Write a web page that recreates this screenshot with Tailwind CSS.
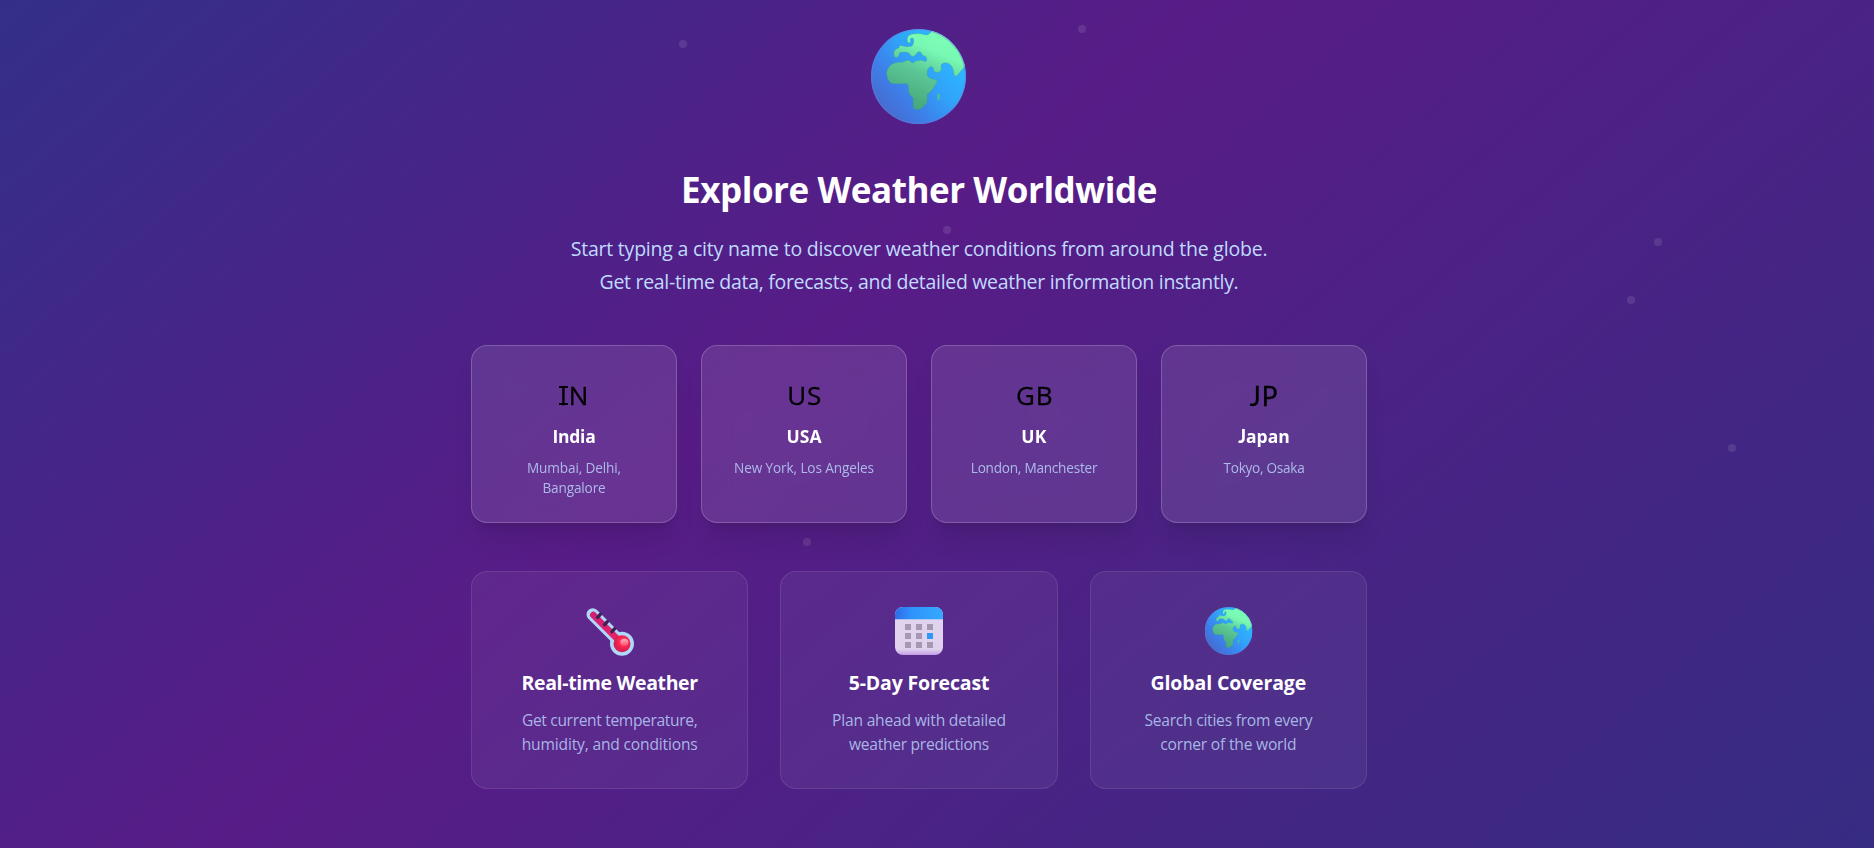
<!DOCTYPE html>
<html lang="en"><head><meta charset="utf-8"><title>Weather</title>
<script src="https://cdn.jsdelivr.net/npm/@tailwindcss/browser@4"></script></head>
<body class="h-[848px] overflow-hidden bg-[#581c87]">
<svg width="0" height="0" class="absolute"><defs>
<linearGradient id="sea" x1="0.1" y1="0.95" x2="0.85" y2="0.3"><stop offset="0" stop-color="#4a66c8"/><stop offset=".35" stop-color="#3d7ee8"/><stop offset=".7" stop-color="#30a4fa"/><stop offset="1" stop-color="#2eb6ff"/></linearGradient>
<linearGradient id="land" x1="0.35" y1="1" x2="0.75" y2="0.1"><stop offset="0" stop-color="#45a57a"/><stop offset=".45" stop-color="#5cc897"/><stop offset=".75" stop-color="#78f9b3"/><stop offset="1" stop-color="#7dffb6"/></linearGradient>
<clipPath id="disc"><circle cx="176" cy="169" r="142"/></clipPath>
<symbol id="globe" viewBox="34 27 284 284"><g clip-path="url(#disc)"><rect x="34" y="27" width="284" height="284" fill="url(#sea)"/>
<path fill="url(#land)" stroke="#3c9a86" stroke-opacity=".45" stroke-width="2" d="M220 20L214 36Q205 48 195 44Q182 40 165 41Q142 42 142 58Q142 70 150 69Q154 66 151 58Q156 51 161 56Q164 70 156 78Q145 82 130 78Q117 72 117 84Q102 88 102 100Q102 114 112 112Q120 108 119 98Q134 94 146 98L156 109Q165 111 169 102Q177 90 184 98Q184 106 198 110Q204 120 197 125Q186 118 180 121L168 122Q158 134 150 122Q142 118 130 126Q108 127 98 131Q84 140 80 158Q82 180 94 189Q110 192 140 190Q148 194 146 206Q146 225 160 232L160 262Q164 270 175 268Q186 268 202 246L202 222Q214 218 231 186Q234 180 226 178Q206 176 202 164Q200 144 212 140Q222 138 220 149Q224 158 232 158Q248 152 244 143Q240 130 256 128Q276 130 280 150Q282 172 290 168L330 120V20Z"/><path fill="#4dbf9c" d="M232 222l8-2v16l-7 4z"/></g><circle cx="176" cy="169" r="140" fill="none" stroke="#6d79d8" stroke-opacity=".45" stroke-width="4"/></symbol>
<linearGradient id="hd"><stop offset="0" stop-color="#2f6be8"/><stop offset=".35" stop-color="#2f93fc"/><stop offset="1" stop-color="#33aaff"/></linearGradient>
<linearGradient id="cb" x2="0" y2="1"><stop offset="0" stop-color="#e0d4ee"/><stop offset=".88" stop-color="#e0d2ee"/><stop offset="1" stop-color="#c39ee6"/></linearGradient>
<linearGradient id="tube" x1="0" y1="0" x2="1" y2="1"><stop offset="0" stop-color="#d21f72"/><stop offset="1" stop-color="#e82368"/></linearGradient>
<radialGradient id="bulb" cx=".6" cy=".4"><stop offset="0" stop-color="#ff4a6c"/><stop offset=".6" stop-color="#fb2650"/><stop offset="1" stop-color="#d9204e"/></radialGradient>
<linearGradient id="shine" x2="0" y2="1"><stop offset="0" stop-color="#ffb0c0"/><stop offset="1" stop-color="#ff4a6c"/></linearGradient>
</defs></svg>
<main class="relative flex h-[848px] flex-col items-center overflow-hidden bg-linear-to-br/srgb from-[#1e3a8a] via-[#581c87] to-[#312e81] bg-[length:100%_1620px] bg-[position:0_-585px] bg-no-repeat pr-9 pt-[29px] text-center font-['Open_Sans',sans-serif]">
<i class="absolute left-[679px] top-[40px] size-2 rounded-full bg-white/10"></i><i class="absolute left-[1078px] top-[25px] size-2 rounded-full bg-white/10"></i><i class="absolute left-[943px] top-[226px] size-2 rounded-full bg-white/10"></i><i class="absolute left-[1654px] top-[238px] size-2 rounded-full bg-white/10"></i><i class="absolute left-[1627px] top-[296px] size-2 rounded-full bg-white/10"></i><i class="absolute left-[1728px] top-[444px] size-2 rounded-full bg-white/10"></i><i class="absolute left-[803px] top-[538px] size-2 rounded-full bg-white/10"></i><i class="absolute left-[743px] top-[426px] size-2 rounded-full bg-white/10"></i><i class="absolute left-[1038px] top-[406px] size-2 rounded-full bg-white/10"></i>
<svg class="mr-px size-[95px] shrink-0"><use href="#globe"/></svg>
<h2 class="mt-[46px] text-[35px] leading-10 font-bold tracking-[-0.45px] text-white">Explore Weather Worldwide</h2>
<p class="mt-[23px] text-[19.5px] leading-[32.5px] text-[#bfdbfe]"><span class="tracking-[-0.22px]">Start typing a city name to discover weather conditions from around the globe.</span><br><span class="tracking-[-0.3px]">Get real-time data, forecasts, and detailed weather information instantly.</span></p>
<section class="mt-[47px] grid w-[896px] grid-cols-4 gap-6">
<article class="h-[178px] rounded-2xl border border-white/20 bg-white/10 pt-[31px] shadow-xl backdrop-blur-lg"><div class="h-9 text-[26px] leading-9 text-black [-webkit-text-stroke:0.3px_black]"><span class="relative mr-[1.6px] inline-block before:absolute before:top-[9px] before:-left-px before:-right-px before:h-[2px] before:bg-black after:absolute after:top-[26px] after:-left-px after:-right-px after:h-[2px] after:bg-black">I</span>N</div><h3 class="mt-[9px] h-7 text-[17.5px] leading-7 font-bold tracking-[-0.25px] text-white">India</h3><p class="mt-2 text-[13.6px] leading-5 text-[#bfdbfe]/80"><span class="tracking-[-0.12px]">Mumbai, Delhi,</span><br><span class="tracking-[-0.15px]">Bangalore</span></p></article>
<article class="h-[178px] rounded-2xl border border-white/20 bg-white/10 pt-[31px] shadow-xl backdrop-blur-lg"><div class="h-9 pl-[1.5px] text-[26px] leading-9 tracking-[1px] text-black [-webkit-text-stroke:0.3px_black]">US</div><h3 class="mt-[9px] h-7 text-[17.5px] leading-7 font-bold tracking-[0.1px] text-white">USA</h3><p class="mt-2 text-[13.6px] leading-5 tracking-[-0.11px] text-[#bfdbfe]/80">New York, Los Angeles</p></article>
<article class="h-[178px] rounded-2xl border border-white/20 bg-white/10 pt-[31px] shadow-xl backdrop-blur-lg"><div class="h-9 pl-[1.5px] text-[26px] leading-9 tracking-[1px] text-black [-webkit-text-stroke:0.3px_black]">GB</div><h3 class="mt-[9px] h-7 text-[17.5px] leading-7 font-bold tracking-[0.4px] text-white">UK</h3><p class="mt-2 text-[13.6px] leading-5 tracking-[-0.23px] text-[#bfdbfe]/80">London, Manchester</p></article>
<article class="h-[178px] rounded-2xl border border-white/20 bg-white/10 pt-[31px] shadow-xl backdrop-blur-lg"><div class="h-9 pt-px font-['Lato',sans-serif] text-[26px] leading-9 tracking-[1px] text-black [-webkit-text-stroke:0.3px_black]">JP</div><h3 class="mt-[9px] h-7 text-[17.5px] leading-7 font-bold text-white"><span class="font-['Lato',sans-serif] text-[18px] leading-none font-black">J</span>apan</h3><p class="mt-2 text-[13.6px] leading-5 tracking-[-0.27px] text-[#bfdbfe]/80">Tokyo, Osaka</p></article>
</section>
<section class="mt-12 grid w-[896px] grid-cols-3 gap-8">
<article class="h-[218px] rounded-2xl border border-white/10 bg-white/5 pt-[35px]"><svg class="mx-auto size-12 overflow-visible" viewBox="47 36 144 144"><path d="M67 58L155 146" stroke="#aed9fa" stroke-width="37" stroke-linecap="round"/><circle cx="155" cy="146" r="36" fill="#aed9fa"/><path d="M69 60L150 141" stroke="url(#tube)" stroke-width="20" stroke-linecap="round"/><circle cx="155" cy="146" r="25.500" fill="url(#bulb)"/><ellipse cx="162" cy="142" rx="12" ry="11" fill="url(#shine)"/><path d="M90 58l-8 9M111 80l-8 9M133 101l-8 9" stroke="#3a2257" stroke-width="10" stroke-linecap="round"/></svg><h3 class="mt-[14px] text-[19.5px] leading-7 font-bold tracking-[-0.36px] text-white">Real-time Weather</h3><p class="mt-[11px] text-[15.6px] leading-6 text-[#bfdbfe]/80"><span class="tracking-[-0.35px]">Get current temperature,</span><br><span class="tracking-[-0.17px]">humidity, and conditions</span></p></article>
<article class="h-[218px] rounded-2xl border border-white/10 bg-white/5 pt-[35px]"><svg class="mx-auto size-12" viewBox="45 36 144 144"><rect x="45" y="36" width="144" height="144" rx="24" fill="url(#cb)"/><path d="M45 73V60a24 24 0 0 1 24-24h96a24 24 0 0 1 24 24v13z" fill="url(#hd)"/><path fill="#a598b0" d="M75 87h18v18H75zM108 87h18v18h-18zM141 87h18v18h-18zM75 114h18v18H75zM108 114h18v18h-18zM75 141h18v18H75zM108 141h18v18h-18zM141 141h18v18h-18z"/><path fill="#2f98f4" d="M141 114h18v18h-18z"/></svg><h3 class="mt-[14px] text-[19.5px] leading-7 font-bold tracking-[-0.18px] text-white">5-Day Forecast</h3><p class="mt-[11px] text-[15.6px] leading-6 text-[#bfdbfe]/80"><span class="tracking-[-0.2px]">Plan ahead with detailed</span><br><span class="tracking-[-0.28px]">weather predictions</span></p></article>
<article class="h-[218px] rounded-2xl border border-white/10 bg-white/5 pt-[35px]"><svg class="mx-auto size-12 translate-x-[0.6px]"><use href="#globe"/></svg><h3 class="mt-[14px] text-[19.5px] leading-7 font-bold tracking-[-0.13px] text-white">Global Coverage</h3><p class="mt-[11px] text-[15.6px] leading-6 text-[#bfdbfe]/80"><span class="tracking-[-0.24px]">Search cities from every</span><br><span class="tracking-[-0.2px]">corner of the world</span></p></article>
</section>
</main>
</body></html>
